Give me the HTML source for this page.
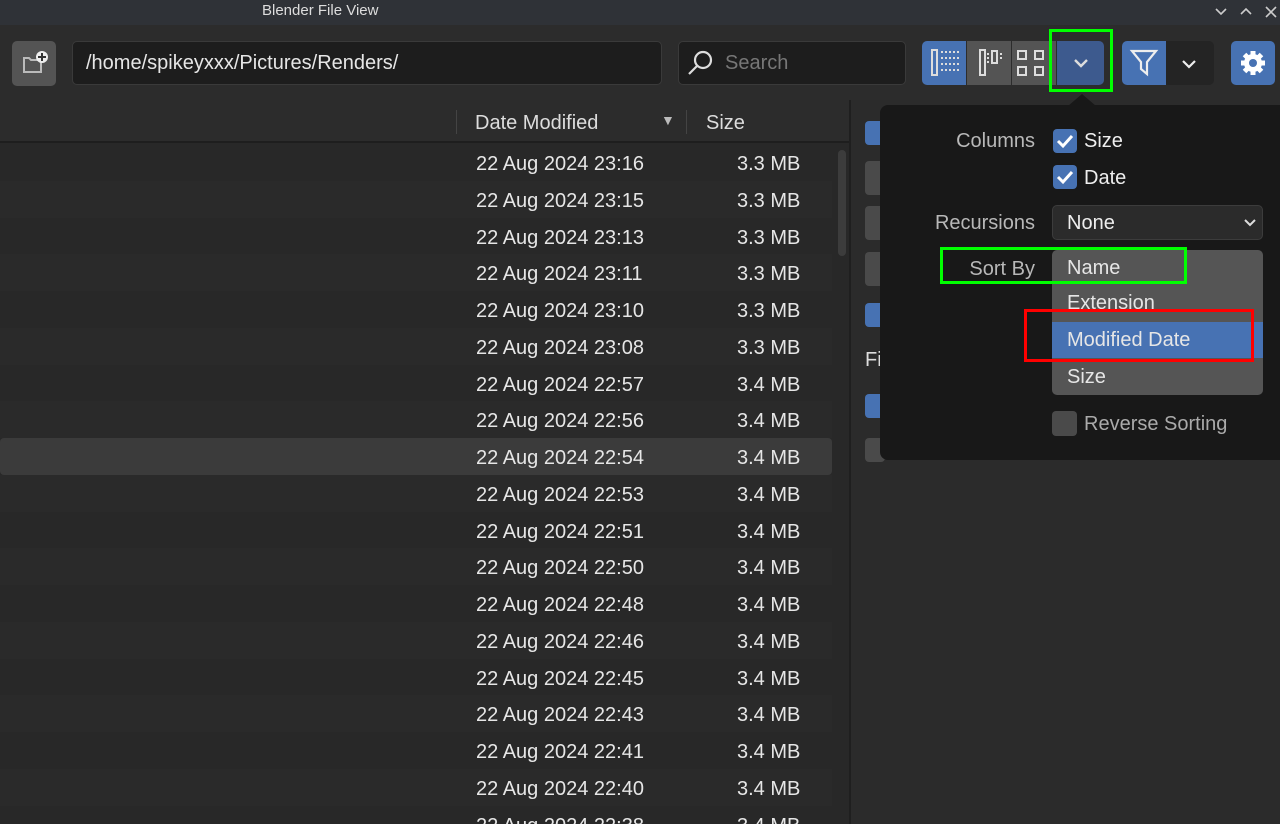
<!DOCTYPE html>
<html style="width:1280px;height:824px;overflow:hidden"><head><meta charset="utf-8"><style>
*{box-sizing:border-box;margin:0;padding:0}
body{width:1280px;height:824px;overflow:hidden;background:#282828;font-family:"Liberation Sans",sans-serif;color:#ddd;position:relative}
.a{position:absolute}
.row{position:absolute;left:0;width:832px;height:37px;font-size:20px;color:#e6e6e6}
.row span{position:absolute;top:9px}
.btn{position:absolute;border-radius:5px}
.lbl{position:absolute;font-size:20px;color:#b8b8b8;text-align:right;width:150px}
.cb{position:absolute;width:24px;height:24px;border-radius:4px;background:#4772b3}
.opt{position:absolute;left:1052px;width:211px;height:36px;font-size:20px;color:#e6e6e6;padding:7px 0 0 15px}
</style></head><body>
<div class="a" style="left:0;top:0;width:1280px;height:25px;background:#2f3237"></div>
<div class="a" style="left:262px;top:2px;font-size:15px;color:#ddd">Blender File View</div>
<svg class="a" style="left:1212px;top:4px" width="68" height="16" stroke="#ccc" stroke-width="1.6" fill="none"><path d="M4 5l5 5 5-5M29 10l5-5 5 5M54 3l10 10M64 3l-10 10"/></svg>
<div class="a" style="left:0;top:25px;width:1280px;height:75px;background:#2c2c2c"></div>
<div class="btn" style="left:12px;top:41px;width:44px;height:45px;background:#545454"></div>
<svg class="a" style="left:20px;top:48px" width="30" height="32"><path d="M4 10h5l2 2h10v12H4z" fill="none" stroke="#bbb" stroke-width="2"/><circle cx="22" cy="9" r="6" fill="#eee"/><path d="M22 5v8M18 9h8" stroke="#333" stroke-width="2"/></svg>
<div class="btn" style="left:72px;top:41px;width:590px;height:44px;background:#1d1d1d;border:1px solid #3a3a3a"></div>
<div class="a" style="left:86px;top:52px;font-size:20px;color:#e6e6e6">/home/spikeyxxx/Pictures/Renders/</div>
<div class="btn" style="left:678px;top:41px;width:228px;height:44px;background:#1d1d1d;border:1px solid #3a3a3a"></div>
<svg class="a" style="left:684px;top:47px" width="32" height="32" stroke="#ddd" stroke-width="2.2" fill="none"><circle cx="19" cy="13" r="8"/><path d="M13 19l-8 8"/></svg>
<div class="a" style="left:725px;top:52px;font-size:20px;color:#777">Search</div>
<div class="btn" style="left:922px;top:41px;width:44px;height:44px;background:#4772b3;border-radius:5px 0 0 5px"></div>
<div class="btn" style="left:967px;top:41px;width:44px;height:44px;background:#545454;border-radius:0"></div>
<div class="btn" style="left:1012px;top:41px;width:44px;height:44px;background:#545454;border-radius:0"></div>
<div class="btn" style="left:1057px;top:41px;width:47px;height:44px;background:#3d5a8e;border-radius:0 5px 5px 0"></div>
<svg class="a" style="left:922px;top:41px" width="184" height="44" fill="none" stroke="#ddd" stroke-width="2"><rect x="10" y="9" width="5" height="25"/><path d="M19 11h18M19 17h18M19 23h18M19 29h18" stroke-dasharray="2 2"/><rect x="58" y="9" width="5" height="25"/><rect x="70" y="10" width="5" height="12"/><path d="M66 12v10M79 12v6" stroke-dasharray="2 2"/><rect x="96" y="10" width="8" height="8"/><rect x="113" y="10" width="8" height="8"/><rect x="96" y="26" width="8" height="8"/><rect x="113" y="26" width="8" height="8"/><path d="M153 19l6 6 6-6" stroke-width="2.4"/></svg>
<div class="btn" style="left:1122px;top:41px;width:92px;height:44px;background:#242424"></div>
<div class="btn" style="left:1122px;top:41px;width:44px;height:44px;background:#4772b3;border-radius:5px 0 0 5px"></div>
<svg class="a" style="left:1122px;top:41px" width="92" height="44" fill="none" stroke="#eee" stroke-width="2.2"><path d="M10 10h24l-9 11v12l-6-5v-7z"/><path d="M61 20l6 6 6-6"/></svg>
<div class="btn" style="left:1231px;top:41px;width:44px;height:44px;background:#4772b3"></div>
<svg class="a" style="left:1236px;top:46px" width="34" height="34"><g fill="#fff"><circle cx="17" cy="17" r="9"/><g stroke="#fff" stroke-width="5"><path d="M17 5v24M5 17h24M8.5 8.5l17 17M25.5 8.5l-17 17"/></g></g><circle cx="17" cy="17" r="4" fill="#4772b3"/></svg>
<div class="a" style="left:0;top:100px;width:850px;height:43px;background:#2c2c2c;border-bottom:2px solid #1e1e1e"></div>
<div class="a" style="left:456px;top:110px;width:1px;height:24px;background:#444"></div>
<div class="a" style="left:686px;top:110px;width:1px;height:24px;background:#444"></div>
<div class="a" style="left:475px;top:112px;font-size:20px;color:#ddd">Date Modified</div>
<div class="a" style="left:661px;top:112px;font-size:14px;color:#bbb">▼</div>
<div class="a" style="left:706px;top:112px;font-size:20px;color:#ddd">Size</div>
<div class="a" style="left:849px;top:100px;width:2px;height:724px;background:#1f1f1f"></div>
<div class="a" style="left:851px;top:100px;width:429px;height:724px;background:#2b2b2b"></div>
<div class="a" style="left:0;top:144px;width:849px;height:680px;overflow:hidden">
<div id="rows"></div>
<div class="a" style="left:838px;top:6px;width:8px;height:106px;border-radius:4px;background:#3c3c3c"></div>
</div>
<script>
var d=["23:16","23:15","23:13","23:11","23:10","23:08","22:57","22:56","22:54","22:53","22:51","22:50","22:48","22:46","22:45","22:43","22:41","22:40","22:38"];
var h="";for(var i=0;i<d.length;i++){var t=i*36.75;var bg=i==8?"#3b3b3b":(i%2?"#2a2a2a":"#282828");
h+='<div class="row" style="top:'+t+'px;background:'+bg+';'+(i==8?'border-radius:4px':'')+'"><span style="left:476px">22 Aug 2024 '+d[i]+'</span><span style="left:737px">'+(i<6?'3.3':'3.4')+' MB</span></div>';}
document.getElementById("rows").innerHTML=h;
</script>
<div class="cb" style="left:865px;top:121px"></div>
<div class="a" style="left:865px;top:161px;width:20px;height:34px;background:#4a4a4a;border-radius:4px"></div>
<div class="a" style="left:865px;top:206px;width:20px;height:34px;background:#4a4a4a;border-radius:4px"></div>
<div class="a" style="left:865px;top:252px;width:20px;height:34px;background:#4a4a4a;border-radius:4px"></div>
<div class="cb" style="left:865px;top:303px"></div>
<div class="a" style="left:865px;top:349px;font-size:20px;color:#ddd">Fi</div>
<div class="cb" style="left:865px;top:394px"></div>
<div class="a" style="left:865px;top:438px;width:20px;height:24px;background:#4a4a4a;border-radius:4px"></div>
<div class="a" style="left:880px;top:105px;width:400px;height:355px;background:#181818;border-radius:8px 0 0 8px"></div>
<div class="a" style="left:1068px;top:94px;width:0;height:0;border-left:14px solid transparent;border-right:14px solid transparent;border-bottom:12px solid #181818"></div>
<div class="lbl" style="left:885px;top:130px">Columns</div>
<div class="cb" style="left:1053px;top:129px"></div>
<div class="cb" style="left:1053px;top:165px"></div>
<svg class="a" style="left:1053px;top:129px" width="24" height="60" fill="none" stroke="#fff" stroke-width="3"><path d="M5 12l5 5 9-10M5 48l5 5 9-10"/></svg>
<div class="a" style="left:1084px;top:130px;font-size:20px;color:#eee">Size</div>
<div class="a" style="left:1084px;top:167px;font-size:20px;color:#eee">Date</div>
<div class="lbl" style="left:885px;top:212px">Recursions</div>
<div class="btn" style="left:1052px;top:205px;width:211px;height:35px;background:#2b2b2b;border:1px solid #3c3c3c"></div>
<div class="a" style="left:1067px;top:212px;font-size:20px;color:#eee">None</div>
<svg class="a" style="left:1242px;top:216px" width="16" height="14" fill="none" stroke="#ddd" stroke-width="2"><path d="M3 4l5 5 5-5"/></svg>
<div class="lbl" style="left:885px;top:258px">Sort By</div>
<div class="a" style="left:1052px;top:250px;width:211px;height:145px;background:#555;border-radius:5px"></div>
<div class="opt" style="top:250px">Name</div>
<div class="opt" style="top:285px">Extension</div>
<div class="opt" style="top:322px;background:#4772b3">Modified Date</div>
<div class="opt" style="top:359px">Size</div>
<div class="a" style="left:1052px;top:411px;width:25px;height:25px;border-radius:4px;background:#4a4a4a"></div>
<div class="a" style="left:1084px;top:413px;font-size:20px;color:#aaa">Reverse Sorting</div>
<div class="a" style="left:1049px;top:29px;width:64px;height:63px;border:3px solid #00ff00"></div>
<div class="a" style="left:940px;top:247px;width:247px;height:37px;border:3px solid #00ff00"></div>
<div class="a" style="left:1024px;top:309px;width:230px;height:53px;border:3px solid #ff0000"></div>
</body></html>
